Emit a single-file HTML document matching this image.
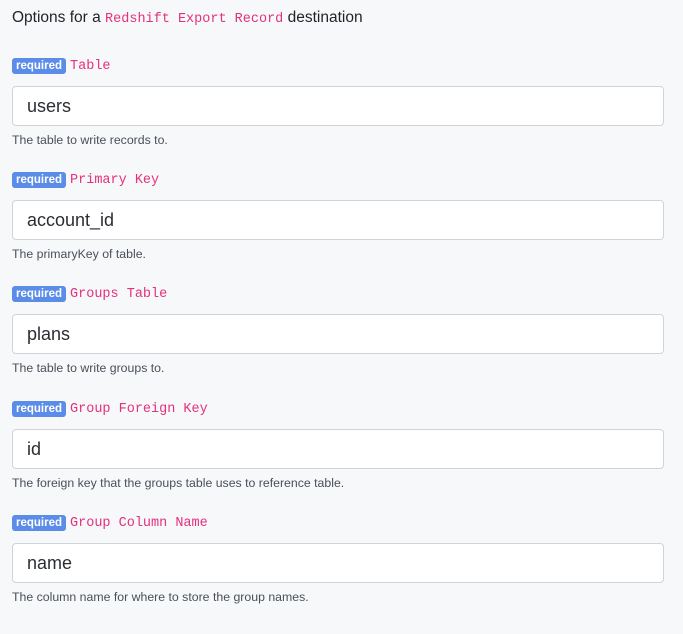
<!DOCTYPE html>
<html><head><style>
body{margin:0;background:#f6f8fa;font-family:"Liberation Sans",sans-serif;width:683px;height:634px;overflow:hidden;position:relative}
.t{position:absolute;left:12px;top:9px;font-size:15.5px;color:#1f2328}
.m{font-family:"Liberation Mono",monospace;color:#e5307d;font-size:13.5px}
.f{position:absolute;left:12px;width:652px}
.lab{height:16px;display:flex;align-items:center}
.b{background:#5b8ce8;color:#fff;font-weight:bold;font-size:11.5px;border-radius:3px;padding:0 4px;height:16px;line-height:16px;margin-right:4px}
.in{margin-top:12px;height:40px;box-sizing:border-box;border:1px solid #cfd4da;border-radius:4px;background:#fff;font-size:18px;color:#2a2e33;padding-left:14px;line-height:38px}
.h{font-size:12.3px;color:#4a5058;margin-top:7px}
</style></head><body>
<div class="t">Options for a <span class="m">Redshift Export Record</span> destination</div>
<div class="f" style="top:58px"><div class="lab"><span class="b">required</span><span class="m">Table</span></div><div class="in">users</div><div class="h">The table to write records to.</div></div>
<div class="f" style="top:172px"><div class="lab"><span class="b">required</span><span class="m">Primary Key</span></div><div class="in">account_id</div><div class="h">The primaryKey of table.</div></div>
<div class="f" style="top:286px"><div class="lab"><span class="b">required</span><span class="m">Groups Table</span></div><div class="in">plans</div><div class="h">The table to write groups to.</div></div>
<div class="f" style="top:401px"><div class="lab"><span class="b">required</span><span class="m">Group Foreign Key</span></div><div class="in">id</div><div class="h">The foreign key that the groups table uses to reference table.</div></div>
<div class="f" style="top:515px"><div class="lab"><span class="b">required</span><span class="m">Group Column Name</span></div><div class="in">name</div><div class="h">The column name for where to store the group names.</div></div>
</body></html>
